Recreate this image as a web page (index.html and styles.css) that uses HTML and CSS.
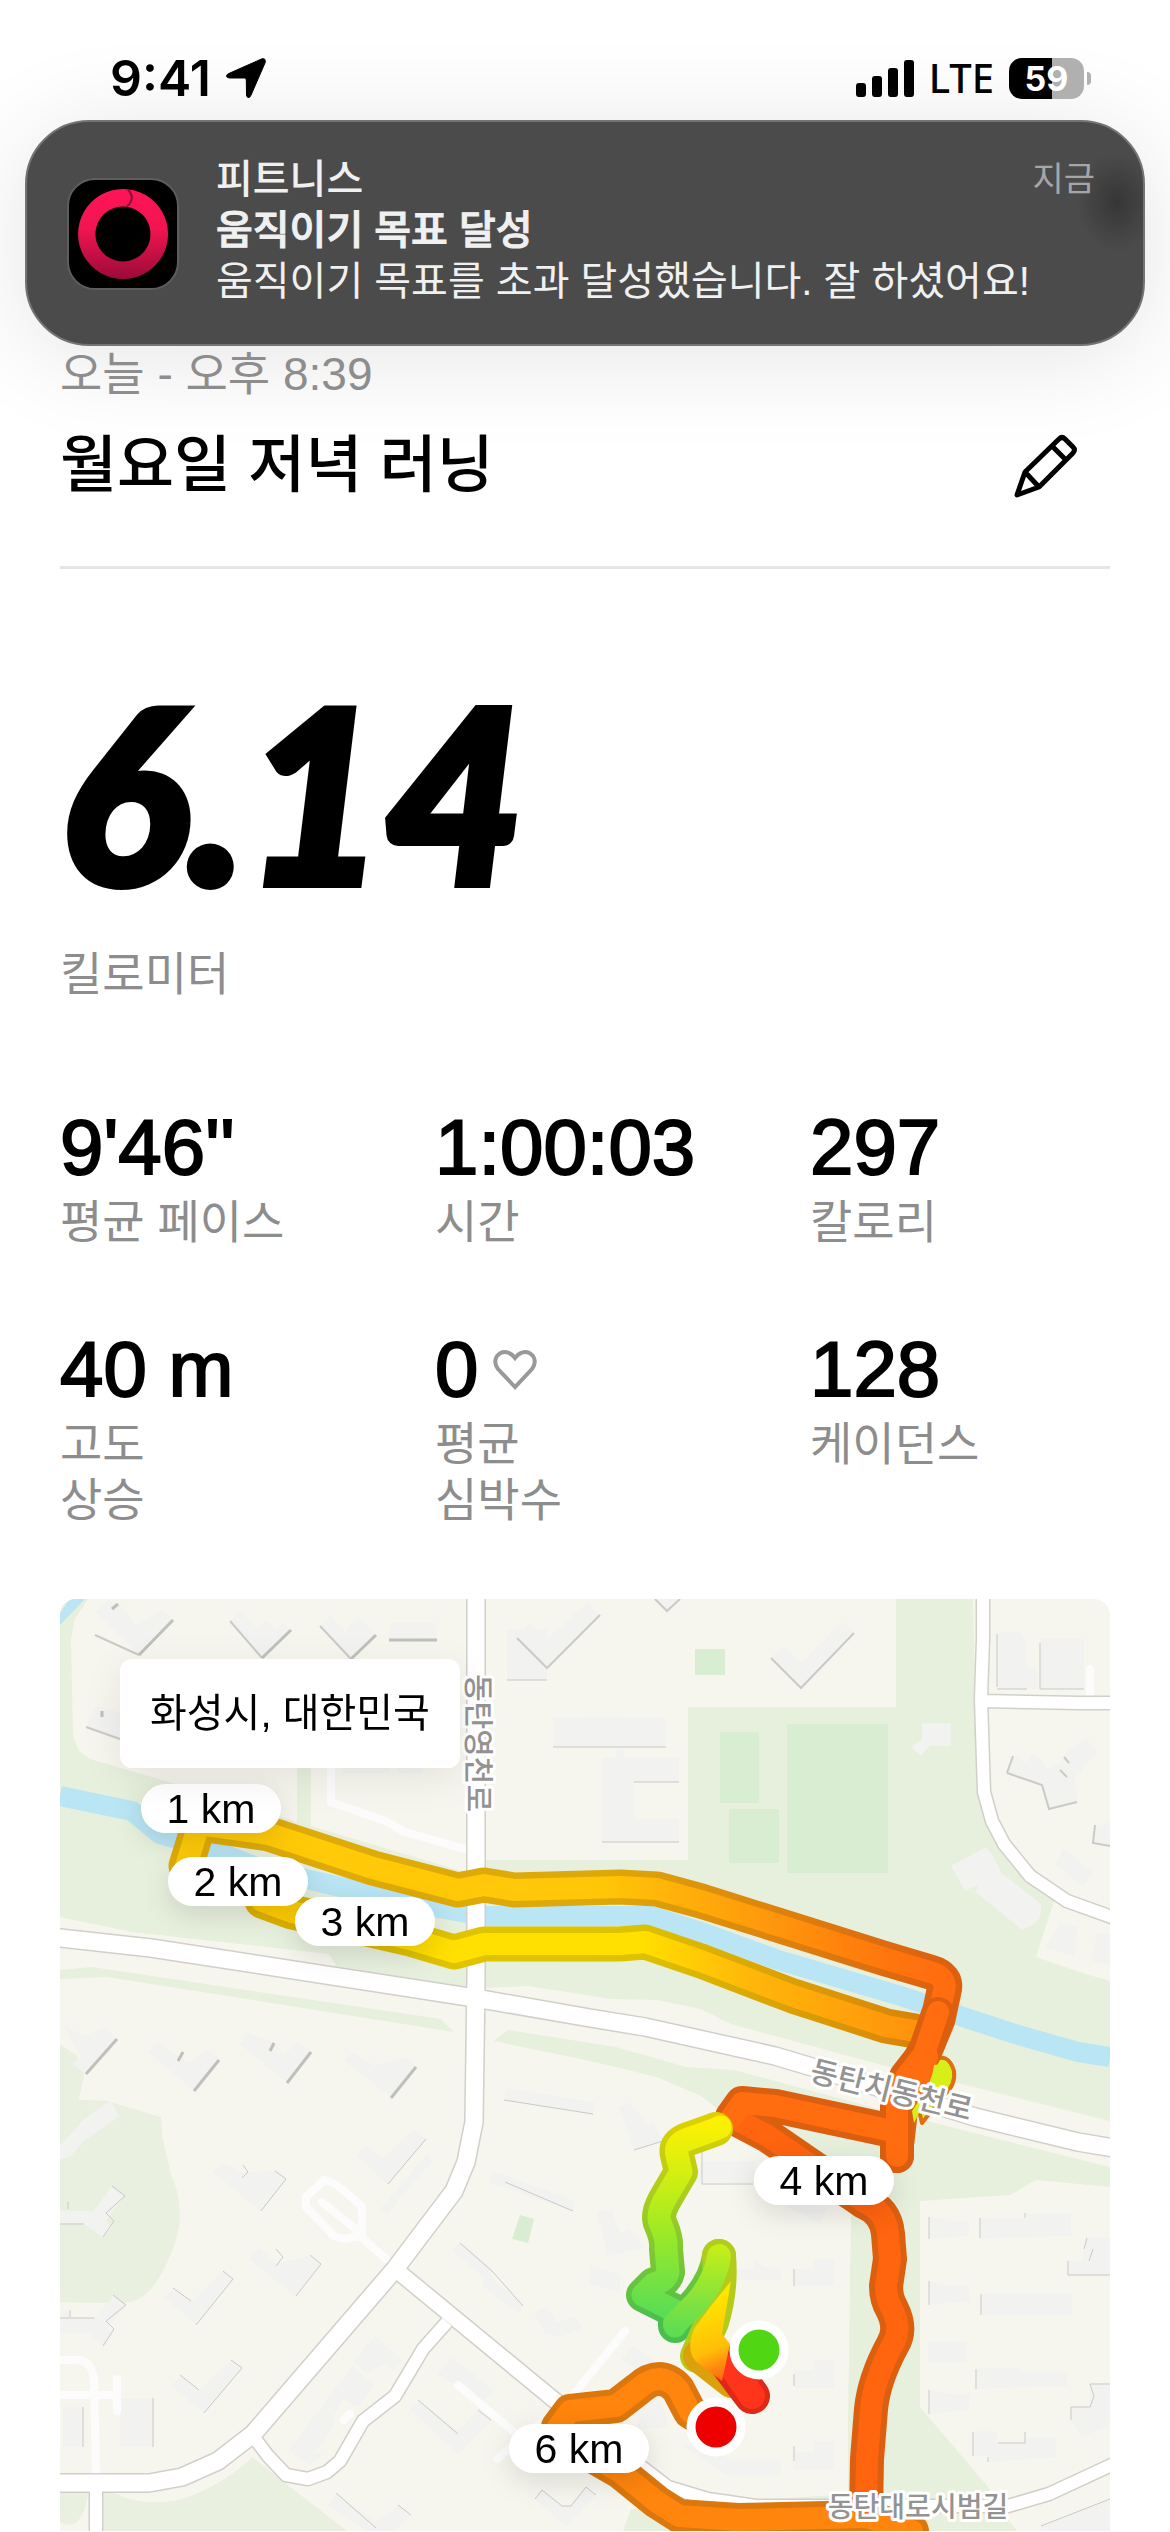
FILE: index.html
```html
<!DOCTYPE html>
<html lang="ko">
<head>
<meta charset="utf-8">
<meta name="viewport" content="width=device-width">
<title>월요일 저녁 러닝</title>
<link rel="stylesheet" href="styles.css">
</head>
<body>
<header class="status">
  <div class="status-side">
    <span class="clock">9:41</span>
    <svg class="locate" viewBox="0 0 40 40" width="40" height="40" aria-hidden="true"><path d="M36 .8Q40 0 39.200 4.500L24.800 37.600Q23.600 40.300 22 39.400 20.500 38.800 20.500 37L20.300 22Q20.200 20.200 18.500 20L3.500 20Q.3 19.600.5 17.800.7 16.500 2.800 15.500Z" stroke="#000" stroke-linejoin="round"/></svg>
  </div>
  <div class="status-side">
    <svg class="signal" viewBox="0 0 58 38" width="58" height="38" aria-hidden="true"><rect y="24" width="10" height="14" rx="3"/><rect x="16" y="17" width="10" height="21" rx="3"/><rect x="32" y="9" width="10" height="29" rx="3"/><rect x="48" y="1" width="10" height="37" rx="3"/></svg>
    <span class="network">LTE</span>
    <span class="battery">59</span>
  </div>
</header>

<section class="banner">
  <svg class="app-icon" viewBox="0 0 112 112" width="112" height="112" aria-hidden="true">
    <defs><linearGradient id="ring" x1="0" y1="0" x2="0" y2="1"><stop offset="0" stop-color="#ff1458"/><stop offset=".45" stop-color="#f01550"/><stop offset="1" stop-color="#9b0a3a"/></linearGradient></defs>
    <rect x="1" y="1" width="110" height="110" rx="27" fill="#000" stroke="#5d5d5d" stroke-width="2"/>
    <path d="M56 11a45 45 0 1 0 .1 0ZM56 28.500a27.500 27.500 0 1 1-.1 0Z" fill="url(#ring)" fill-rule="evenodd"/>
    <path d="M61 11.500q8 9-1 17" fill="none" stroke="#8d0b35" stroke-width="2"/>
  </svg>
  <div class="banner-text">
    <p class="banner-app">피트니스</p>
    <p class="banner-title">움직이기 목표 달성</p>
    <p>움직이기 목표를 초과 달성했습니다. 잘 하셨어요!</p>
  </div>
  <time class="banner-time">지금</time>
</section>

<main class="run">
  <p class="date">오늘 - 오후 8:39</p>
  <div class="title-row">
    <h1>월요일 저녁 러닝</h1>
    <button class="edit" type="button" aria-label="이름 편집">
      <svg viewBox="0 0 64 64" width="64" height="64" fill="none" stroke="#000" stroke-width="5" stroke-linejoin="round" aria-hidden="true"><path d="M3 61 11 38 45 5Q48 2 51 5L59 13Q62 16 59 19L25 53ZM11 38 25 53M38 12 52 26M3 61 25 53"/></svg>
    </button>
  </div>

  <p class="distance">6.14</p>
  <p class="unit">킬로미터</p>

  <dl class="stats">
    <div><dd>9'46''</dd><dt>평균 페이스</dt></div>
    <div><dd>1:00:03</dd><dt>시간</dt></div>
    <div><dd>297</dd><dt>칼로리</dt></div>
    <div><dd>40 m</dd><dt>고도<br>상승</dt></div>
    <div><dd>0 <svg class="heart" viewBox="0 0 46 42" width="46" height="42" aria-hidden="true"><path d="M23 38 6 20Q1 13 5 7 10 1 17 4 20 5 23 9 26 5 29 4 36 1 41 7 45 13 40 20Z" fill="none" stroke="#999" stroke-width="4"/></svg></dd><dt>평균<br>심박수</dt></div>
    <div><dd>128</dd><dt>케이던스</dt></div>
  </dl>

  <section class="map">
    <svg class="map-art" viewBox="0 0 1050 932" role="img" aria-label="러닝 경로 지도">
      <defs>
        <linearGradient id="north" gradientUnits="userSpaceOnUse" x1="130" y1="0" x2="880" y2="0"><stop offset="0" stop-color="#ffcc08"/><stop offset=".55" stop-color="#ffc607"/><stop offset=".75" stop-color="#ff9c0c"/><stop offset=".93" stop-color="#ff760d"/><stop offset="1" stop-color="#ff6d10"/></linearGradient>
        <linearGradient id="north-edge" gradientUnits="userSpaceOnUse" x1="130" y1="0" x2="880" y2="0"><stop offset="0" stop-color="#dfac08"/><stop offset=".55" stop-color="#dda909"/><stop offset=".75" stop-color="#dd880c"/><stop offset="1" stop-color="#dd600f"/></linearGradient>
        <linearGradient id="south" gradientUnits="userSpaceOnUse" x1="190" y1="0" x2="860" y2="0"><stop offset="0" stop-color="#ffc900"/><stop offset=".3" stop-color="#ffe000"/><stop offset=".58" stop-color="#ffe000"/><stop offset=".75" stop-color="#ffb60a"/><stop offset="1" stop-color="#ff920c"/></linearGradient>
        <linearGradient id="south-edge" gradientUnits="userSpaceOnUse" x1="190" y1="0" x2="860" y2="0"><stop offset="0" stop-color="#dcae00"/><stop offset=".3" stop-color="#dfc400"/><stop offset=".58" stop-color="#dcc200"/><stop offset="1" stop-color="#da8209"/></linearGradient>
        <linearGradient id="lime" gradientUnits="userSpaceOnUse" x1="0" y1="520" x2="0" y2="720"><stop offset="0" stop-color="#fff000"/><stop offset=".25" stop-color="#d8ef10"/><stop offset=".55" stop-color="#a0ea24"/><stop offset="1" stop-color="#55dc58"/></linearGradient>
        <linearGradient id="lime-edge" gradientUnits="userSpaceOnUse" x1="0" y1="520" x2="0" y2="720"><stop offset="0" stop-color="#ded000"/><stop offset=".3" stop-color="#b7cd18"/><stop offset=".6" stop-color="#88ca2c"/><stop offset="1" stop-color="#4bbf4d"/></linearGradient>
        <linearGradient id="spur" gradientUnits="userSpaceOnUse" x1="0" y1="650" x2="0" y2="730"><stop offset="0" stop-color="#c4ee18"/><stop offset="1" stop-color="#60dd50"/></linearGradient>
        <linearGradient id="warm" gradientUnits="userSpaceOnUse" x1="650" y1="700" x2="690" y2="800"><stop offset="0" stop-color="#ffe600"/><stop offset=".45" stop-color="#ffbe08"/><stop offset=".6" stop-color="#ff8c10"/><stop offset="1" stop-color="#ff2418"/></linearGradient>
      </defs>
      <rect width="1050" height="932" fill="#f7f6ee"/>

      <g fill="#e7efdd">
        <path d="M0 0H28L15 20 11 40 13 137 19 152 30 160 109 183 237 223V150H251V227L405 273 426 261H628V108H836V0H913L915 100 918 193 928 223 948 250 968 280 994 302 976 358 1026 375 1050 382V522L894 483 848 473 671 425 641 410 597 401 552 400 468 387 405 390 276 367 269 355 72 333 0 318Z"/>
        <path d="M0 371 32 368 381 420 394 433 331 423 47 378 0 380Z"/>
        <path d="M434 442 448 431 556 448 626 468 674 471 819 510 1050 568V588L976 581 950 596 860 602V808L928 888 948 920 957 932H563L571 910 788 895V807L791 607 752 555 730 533 667 517 641 497 597 478 530 462Z"/>
      </g>
      <path d="M571 895 600 882 788 895V807L791 607 700 550 560 700Z" fill="#f7f6ee"/>
      <g transform="translate(-20 440) scale(.37 .3333)" fill="#e9f0e0">
        <path d="M54 15 100 50 120 105 105 182 180 185 328 235 330 290 355 410Q378 460 378 530T330 700Q290 790 220 793L54 790Z"/>
        <path d="M170 1476V1355L205 1365Q270 1400 370 1385 480 1350 575 1255L660 1330 830 1476ZM54 1360H130Q125 1420 100 1450 80 1465 54 1450Z"/>
      </g>
      <g fill="#d9edd2">
        <path d="M635 50h30v26h-30ZM660 133h39v71h-39ZM669 210h50v54h-50ZM727 125h101v149H727ZM460 616 474 620 468 644 452 640Z"/>
      </g>

      <g fill="#f2f2f1">
        <g transform="translate(-20 -20) scale(.37 .3333)">
          <path d="M150 100 185 62 215 75 260 140 330 92 360 122 268 228ZM515 125 540 95 590 150 610 125 640 150 655 130 678 155 600 238ZM757 140 785 110 825 160 860 110 908 168 840 240ZM944 132H1072V184H944ZM1262 152H1370V304H1262ZM1290 178 1325 130 1370 180 1480 70 1513 108 1372 270ZM1387 415H1568V505H1387ZM125 445 150 380 216 400V480ZM818 560H945V582H818ZM965 560H1035V582H965Z"/>
        </g>
        <g transform="translate(530 -20) scale(.37 .3333)">
          <path d="M-20 415H204V505H90V535H240V610H120V720H240V790H32V535H70V505H-20ZM175 60H243L208 95ZM488 238 523 200 571 250 685 128 714 165 570 330ZM1098 160H1160L1180 190V265H1210V330H1108L1098 318ZM1215 180H1335V330H1215ZM897 433H975V500H920L893 530 868 505 897 480ZM1128 580 1145 528 1180 550 1190 525 1215 535 1240 570 1285 540V520L1340 480 1372 515 1310 600 1318 670 1240 692 1220 618ZM1360 790 1365 740 1406 730V802ZM975 860 1070 805 1090 830 1110 880 1218 975Q1225 1010 1200 1035L1168 1052 1042 940 1048 918 1014 935ZM1255 855 1280 808 1360 880 1333 925ZM1230 1105 1272 1030 1318 1045 1310 1133ZM1355 1145 1370 1060 1406 1070V1160Z"/>
        </g>
        <g transform="translate(-20 440) scale(.37 .3333)">
          <path d="M62-40 120-10 175-35 208-2 125 108 90 75 110 50ZM290 38 318 12 400 70 455 32 487 62 418 157ZM540 15 560-20 640 15 660 50 695 5 733 38 667 133ZM823 65 845 38 905 80 985 55 1018 85 950 178ZM54 360V320L120 240 190 185 215 232 120 305 80 355ZM855 350 880 320 925 360 1010 272 1045 300 940 437ZM920 510 1045 345 1060 368 940 522ZM468 400 495 373 550 400 640 395 664 422 597 518ZM54 515H145L193 443 228 472 178 545 196 563 170 596 120 556H54ZM563 660 590 627 640 672 730 650 758 675 690 770ZM335 775 360 748 408 788 495 697 522 722 422 857ZM54 815H80V838H145L197 770 232 800 182 868 197 886 170 922 130 882H54ZM355 1040 380 1010 430 1055 517 964 546 990 442 1124ZM62 1105H115V1223H62ZM217 1080H304V1223H217ZM1262 148 1498 190 1492 227 1255 184ZM1225 395 1452 488 1440 518 1212 430ZM1135 610 1225 690 1220 712 1305 798 1295 825 1195 740 1200 715 1113 635ZM1335 820 1370 803 1395 850 1445 832 1464 868 1405 895 1365 885ZM1508 520 1545 510 1568 600V645L1535 650ZM1490 680 1568 705V760L1483 735ZM905 890 980 965 955 997 930 975 885 1002 845 970ZM845 980 902 1040 860 1105 815 1080 795 1130 800 1150 742 1240 765 1245 730 1280 670 1235ZM1073 1005 1115 955 1228 1055 1195 1090ZM998 1110 1025 1083 1130 1175 1185 1112 1222 1145 1130 1245ZM775 1400 802 1362 908 1450 970 1398 1002 1430 960 1476H880ZM1338 1382 1358 1354 1410 1402 1435 1400 1475 1345 1502 1370 1422 1465Z"/>
        </g>
        <g transform="translate(530 440) scale(.37 .3333)">
          <path d="M78 205 110 190 155 260 170 250 200 305 118 333ZM275 430 305 365H445V433ZM20 520 48 515 85 580 105 570 150 623 48 652ZM530 500 560 480 640 510 620 552ZM250 723 300 690H442V656L470 685H515V723ZM550 690H604V660H660V742H550ZM550 993H604V963H660V1047H550ZM550 1238H604V1207H660V1293H550ZM85 960 115 920 180 970 150 1020ZM918 532 970 545H1025V590L918 600ZM1053 537H1177V523H1300V590L1053 600ZM1293 665H1330L1342 597H1406V710H1293ZM918 727 970 740H1025V787L918 798ZM1057 765H1303V829H1057ZM912 908H1018V970H912ZM1045 988H1165V997H1290V1040L1045 1050ZM1350 1035H1406V1160L1330 1193 1300 1145V1105H1350ZM918 1052 970 1065H1025V1112L918 1125ZM1037 1177H1100V1213H1177V1195H1260V1255L1077 1270V1252H1037ZM1218 1465 1406 1380V1476H1218ZM125 1120 180 1050 215 1165 130 1170ZM250 1220 300 1200 380 1265H515V1310H370Z"/>
        </g>
      </g>
      <g fill="none" stroke="#bfbfbc" stroke-width="3">
        <path d="M113 21 79 56M58 5 52 10M231 31 202 59M316 36 291 60M329 41H377M42 112V118"/>
        <path d="M457 39 487 69 540 16M711 59 741 89 794 34M595 0 607 12 620 0M35 36 79 56M170 22 202 59M260 27 291 60M26 128 60 140M947 174 982 186 989 210 1017 203M947 174 953 157M1050 247 1033 244 1035 226M1004 158 1009 164M1000 171 1007 178" stroke-width="2" stroke-opacity=".8"/>
        <path d="M26 475 57 440M134 492 159 461M227 484 251 453M331 499 356 468M118 462 123 453M210 452 214 444"/>
      </g>
      <g fill="none" stroke="#c9c9c6">
        <path d="M493 148H606M574 183H619M542 243H619M937 90H967M980 90H1024M980 44V90M937 35V88M447 81H487M328 585 366 540M201 612 226 580 215 572M182 579 188 573 183 566M236 697 261 665 250 656M216 667 223 658 216 650M136 726 173 680 163 672M113 689 131 702M144 814 182 769 171 761M120 776 139 791M43 638 54 622 46 614 65 597 52 587M43 747 54 730 46 722 66 706 53 696M0 719H34M0 625H24M8 603V610M10 711V718M93 799V848M23 808V848M358 801 398 835M418 811 431 821M276 894 316 929M338 906 351 916M444 501 533 515M445 583 513 612M400 644 433 673 463 707M475 900 482 891 502 907H511L526 888 536 896M574 551 603 542M642 551V585H693M734 670V687M734 775V787M734 847V862M869 618V640M920 619V639M965 614V619M1027 639 1024 650M1033 650 1029 662M1008 662V676H1050M869 682V706M921 695V716M916 770V790M1050 785H1030L1034 797 1030 808H1011V821M869 791V815M913 833V857M965 833V844H938M928 858V863M981 927 1050 900"/>
      </g>

      <g fill="none" stroke="#fcfcfc" stroke-width="8" stroke-linecap="round">
        <path d="M271 165V203L325 222 345 233 405 250M326 660 300 637 284 640 274 637 246 608V598L264 581Q274 581 302 608V635L262 603M0 761H18Q31 762 34 779L36 874M0 796H57M57 780V812M398 786 460 838M437 860 510 800 565 732M284 821 290 815M1030 70V100"/>
      </g>

      <path d="M0 197 72 212 100 235 150 250 202 270 276 287 368 307 424 317H591L641 333 715 360 844 398 900 417 955 435 1018 453 1050 458" fill="none" stroke="#b9e5f4" stroke-width="20"/>
      <path d="M10 0H25L0 26V14Z" fill="#b9e5f4"/>

      <g fill="none" stroke="#d2cfcb" stroke-linejoin="round">
        <path d="M416-10V380L414 523 406 563 394 592 335 670 193 835 158 862 122 878 89 884H-10M-10 338 0 339 91 349 415 399 530 419 585 428 715 457 752 468 915 518 1018 543 1060 550" stroke-width="20"/>
        <path d="M335 670 510 814" stroke-width="18"/>
        <path d="M387 723 363 750 335 797 303 822 280 862 267 873 248 880 226 876 208 857 193 837M36 884V942M923-10V40L921 100 924 193 932 222 944 245 970 277 1007 302 1060 321M922 102 1018 104H1060M578 865 608 888 648 900 696 907H948L989 895 1060 862" stroke-width="15"/>
      </g>
      <g fill="none" stroke="#fff" stroke-linejoin="round">
        <path d="M416-10V380L414 523 406 563 394 592 335 670 193 835 158 862 122 878 89 884H-10M-10 338 0 339 91 349 415 399 530 419 585 428 715 457 752 468 915 518 1018 543 1060 550" stroke-width="17"/>
        <path d="M335 670 510 814" stroke-width="15"/>
        <path d="M387 723 363 750 335 797 303 822 280 862 267 873 248 880 226 876 208 857 193 837M36 884V942M923-10V40L921 100 924 193 932 222 944 245 970 277 1007 302 1060 321M922 102 1018 104H1060M578 865 608 888 648 900 696 907H948L989 895 1060 862" stroke-width="12"/>
      </g>

      <g fill="none" stroke-linecap="round" stroke-linejoin="round">
        <g stroke-width="35">
          <path d="M202 302 232 313 350 340 394 353 424 345 560 345 585 343 641 362 733 397 826 427 855 432" stroke="url(#south-edge)"/>
          <path d="M126 267 139 225 209 235 313 269 398 291 424 286 454 291 560 288 597 290 641 302 826 360 870 373Q888 378 884 392L878 420 867 447 852 478 841 507 837 542" stroke="url(#north-edge)"/>
        </g>
        <path d="M202 302 232 313 350 340 394 353 424 345 560 345 585 343 641 362 733 397 826 427 855 432" stroke="url(#south)" stroke-width="22"/>
        <path d="M126 267 139 225 209 235 313 269 398 291 424 286 454 291 560 288 597 290 641 302 826 360 870 373Q888 378 884 392L878 420 867 447 852 478 841 507 837 542" stroke="url(#north)" stroke-width="22"/>

        <path d="M872 462Q888 452 894 472 896 486 884 496L862 524 856 500Z" fill="#d7ef18" stroke="#de6f12" stroke-width="4"/>
        <g stroke="#dc5f10" stroke-width="34">
          <path d="M837 557V533L715 507 682 504 672 518 708 537 737 557 804 603Q826 612 828 635L830 660 826 687Q826 700 832 710 842 730 833 745 814 780 811 810L807 860 806 915"/>
          <path d="M878 415 864 455 846 478 837 507V557"/>
        </g>
        <path d="M852 932 806 918 678 921 619 917 597 903 560 873 520 850 498 828 510 812 556 807 578 790Q600 770 618 790L630 813 650 825" stroke="#db770c" stroke-width="34"/>
        <path d="M852 932 806 918 678 921 619 917 597 903 560 873 520 850 498 828 510 812 556 807 578 790Q600 770 618 790L630 813 650 825" stroke="#ff850d" stroke-width="22"/>
        <g stroke="#ff640f" stroke-width="22">
          <path d="M672 518 708 537 737 557 804 603Q826 612 828 635L830 660 826 687Q826 700 832 710 842 730 833 745 814 780 811 810L807 860 806 905"/>
          <path d="M878 413 864 455 846 478 837 507V557 533L715 507 682 504 672 518" stroke="#ff6d10"/>
        </g>
        <path d="M866 458 854 490" stroke="#ff6d10" stroke-width="24"/>
        <path d="M874 466Q890 464 884 484L870 492ZM852 512 860 500 862 508 854 524Z" fill="#d7ef18"/>

        <path d="M656 530Q640 536 628 540 614 545 617 556L621 573Q612 588 604 602 596 617 601 626 607 640 606 650L608 673Q606 682 594 685L583 696 615 712V727L637 703 Q656 680 659 657" stroke="url(#lime-edge)" stroke-width="34"/>
        <path d="M659 657Q662 690 652 723L637 757" stroke="#b3cc1c" stroke-width="34"/>
        <path d="M660 528 656 530Q640 536 628 540 614 545 617 556L621 573Q612 588 604 602 596 617 601 626 607 640 606 650L608 673Q606 682 594 685L583 696 615 712V727" stroke="url(#lime)" stroke-width="23"/>
        <path d="M615 725 637 703Q656 680 659 657" stroke="url(#spur)" stroke-width="24"/>
        <path d="M672 782 640 757" stroke="#dca00c" stroke-width="34"/>
        <path d="M692 797 668 765" stroke="#dc2918" stroke-width="36"/>
        <path d="M692 797 672 768" stroke="#ff341a" stroke-width="26"/>
        <path d="M671 682 662 735 670 745 662 782 640 766Q624 755 634 730L650 708Z" fill="url(#warm)"/>
      </g>

      <g class="street">
        <text transform="translate(421 144) rotate(90)" font-size="30">동탄영천로</text>
        <text transform="translate(832 489) rotate(14)" font-size="30">동탄치동천로</text>
        <text transform="translate(858 906)" font-size="28">동탄대로시범길</text>
      </g>

      <g class="pin"><circle cx="699" cy="751" r="25" fill="#51d614"/><circle cx="656" cy="828" r="25" fill="#ee0000"/></g>

      <g class="marker">
        <g transform="translate(81 185)"><rect width="140" height="49" rx="25"/><text x="70" y="39">1 km</text></g>
        <g transform="translate(108 258)"><rect width="140" height="49" rx="25"/><text x="70" y="39">2 km</text></g>
        <g transform="translate(235 298)"><rect width="140" height="49" rx="25"/><text x="70" y="39">3 km</text></g>
        <g transform="translate(694 557)"><rect width="140" height="49" rx="25"/><text x="70" y="39">4 km</text></g>
        <g transform="translate(449 825)"><rect width="140" height="49" rx="25"/><text x="70" y="39">6 km</text></g>
      </g>
    </svg>
    <p class="place">화성시, 대한민국</p>
  </section>
</main>
</body>
</html>
```

FILE: styles.css
```css
* {
  box-sizing: border-box;
  margin: 0;
}

body {
  background: #fff;
  color: #000;
  font-family: "Liberation Sans", "Noto Sans CJK KR", sans-serif;
}

svg {
  display: block;
  flex: none;
}

.status {
  display: flex;
  align-items: center;
  justify-content: space-between;
  height: 120px;
  padding: 36px 79px 0 110px;
}

.status-side {
  display: flex;
  align-items: center;
  gap: 15px;
}

.clock {
  font: 600 50px/60px Inter, sans-serif;
}

.network {
  font: 500 40px/48px "Noto Sans", sans-serif;
}

.battery {
  position: relative;
  width: 75px;
  height: 41px;
  margin-right: 7px;
  border-radius: 13px;
  background: linear-gradient(90deg, #000 58%, #b0b0b0 58%);
  color: #fff;
  font: 700 34px/41px Inter, sans-serif;
  text-align: center;
}

.battery::after {
  content: "";
  position: absolute;
  left: 78px;
  top: 14px;
  width: 4px;
  height: 13px;
  border-radius: 0 4px 4px 0;
  background: #b0b0b0;
}

.banner {
  display: flex;
  min-height: 226px;
  margin: 0 25px;
  padding: 32px 48px 30px 40px;
  border: 2px solid #747474;
  border-radius: 64px;
  background: radial-gradient(ellipse 40px 50px at 1090px 80px, #363636, #4b4b4b);
  box-shadow: 0 10px 100px rgba(0, 0, 0, 0.11);
  color: #f0f0f0;
  font-size: 40px;
  line-height: 51px;
}

.app-icon {
  align-self: center;
  margin-right: 37px;
}

.banner-text {
  flex: 1;
}

.banner-app {
  font-weight: 500;
}

.banner-title {
  font-weight: 500;
  -webkit-text-stroke: 1px #f0f0f0;
}

.banner-time {
  color: #a6a6a6;
  font-size: 34px;
}

.run {
  padding: 0 60px;
}

.date {
  color: #8d8d8d;
  font-size: 46px;
  line-height: 56px;
}

.title-row {
  display: flex;
  align-items: center;
  justify-content: space-between;
  height: 167px;
  padding-bottom: 36px;
  border-bottom: 3px solid #e5e5e5;
}

h1 {
  font-size: 62px;
  font-weight: 500;
  line-height: 80px;
}

.edit {
  padding: 0;
  margin-right: 32px;
  border: 0;
  background: none;
}

.distance {
  margin-top: 102px;
  font: italic 900 240px/240px Lato, sans-serif;
  -webkit-text-stroke: 8px #000;
}

.unit,
.stats dt {
  color: #8d8d8d;
  font-size: 46px;
  line-height: 56px;
}

.unit {
  margin-top: 35px;
}

.stats {
  display: grid;
  grid-template-columns: 375fr 375fr 300fr;
  grid-template-rows: 222px auto;
  margin-top: 99px;
}

.stats div {
  display: flex;
  flex-direction: column;
}

.stats dd {
  display: flex;
  align-items: center;
  gap: 14px;
  font-size: 78px;
  line-height: 93px;
  -webkit-text-stroke: 2px #000;
}

.map {
  position: relative;
  margin-top: 71px;
  overflow: hidden;
  border-radius: 16px 16px 0 0;
}

.map-art {
  width: 100%;
  height: auto;
}

.place {
  position: absolute;
  left: 60px;
  top: 60px;
  padding: 0 30px;
  border-radius: 12px;
  background: #fff;
  box-shadow: 0 10px 40px rgba(0, 0, 0, 0.08);
  font-size: 40px;
  line-height: 109px;
}

.street text {
  fill: #939393;
  stroke: #fff;
  stroke-width: 6px;
  stroke-linejoin: round;
  paint-order: stroke;
  font-family: "Noto Sans CJK KR", sans-serif;
  font-weight: 500;
  text-anchor: middle;
  dominant-baseline: central;
}

.pin circle {
  stroke: #fff;
  stroke-width: 9px;
}

.marker {
  filter: drop-shadow(0 8px 14px rgba(0, 0, 0, 0.12));
}

.marker rect {
  fill: #fff;
}

.marker text {
  font-size: 41px;
  text-anchor: middle;
}
```
